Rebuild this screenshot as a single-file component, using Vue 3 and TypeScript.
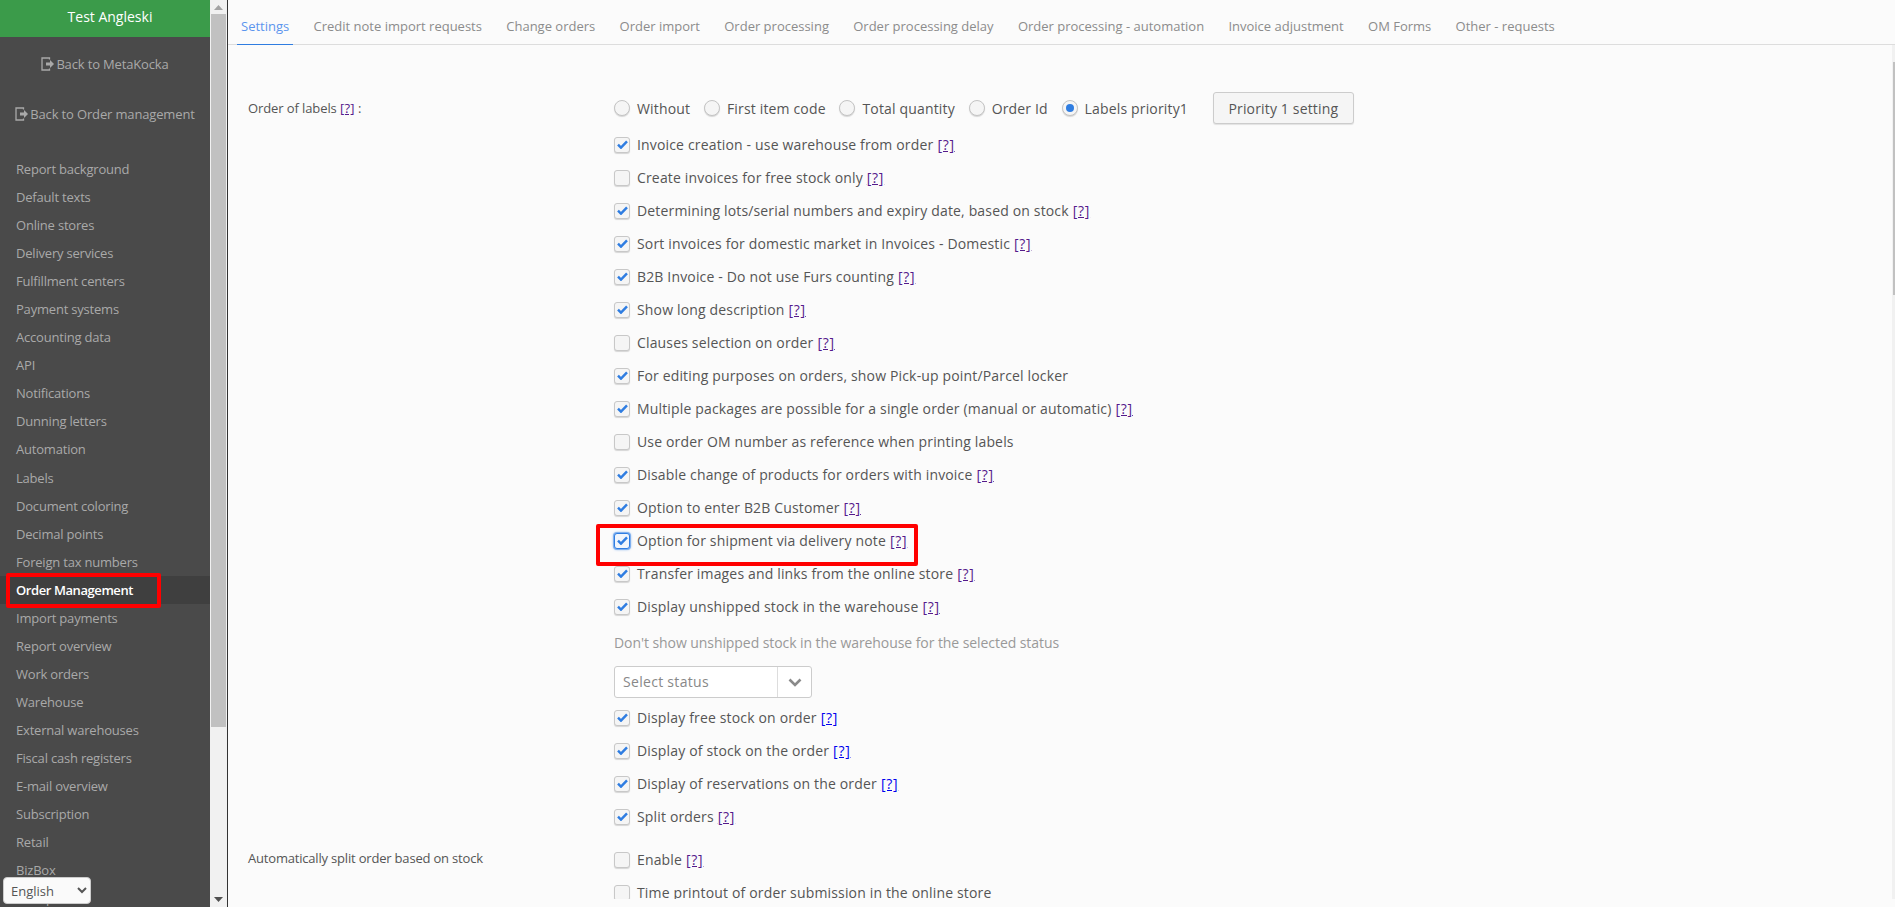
<script setup lang="ts">
const menu: string[] = ['Report background','Default texts','Online stores','Delivery services','Fulfillment centers','Payment systems','Accounting data','API','Notifications','Dunning letters','Automation','Labels','Document coloring','Decimal points','Foreign tax numbers','Order Management','Import payments','Report overview','Work orders','Warehouse','External warehouses','Fiscal cash registers','E-mail overview','Subscription','Retail','BizBox','Lock periods']
const tabs: string[] = ['Settings','Credit note import requests','Change orders','Order import','Order processing','Order processing delay','Order processing - automation','Invoice adjustment','OM Forms','Other - requests']
const radios = [{t:'Without',on:false},{t:'First item code',on:false},{t:'Total quantity',on:false},{t:'Order Id',on:false},{t:'Labels priority1',on:true}]
interface Row { t: string; on: boolean; q: boolean; focus?: boolean; fresh?: boolean }
const rows1: Row[] = [
 {t:'Invoice creation - use warehouse from order',on:true,q:true},
 {t:'Create invoices for free stock only',on:false,q:true},
 {t:'Determining lots/serial numbers and expiry date, based on stock',on:true,q:true},
 {t:'Sort invoices for domestic market in Invoices - Domestic',on:true,q:true},
 {t:'B2B Invoice - Do not use Furs counting',on:true,q:true},
 {t:'Show long description',on:true,q:true},
 {t:'Clauses selection on order',on:false,q:true},
 {t:'For editing purposes on orders, show Pick-up point/Parcel locker',on:true,q:false},
 {t:'Multiple packages are possible for a single order (manual or automatic)',on:true,q:true},
 {t:'Use order OM number as reference when printing labels',on:false,q:false},
 {t:'Disable change of products for orders with invoice',on:true,q:true},
 {t:'Option to enter B2B Customer',on:true,q:true},
 {t:'Option for shipment via delivery note',on:true,q:true,focus:true},
 {t:'Transfer images and links from the online store',on:true,q:true},
 {t:'Display unshipped stock in the warehouse',on:true,q:true},
]
const rows2: Row[] = [
 {t:'Display free stock on order',on:true,q:true,fresh:true},
 {t:'Display of stock on the order',on:true,q:true,fresh:true},
 {t:'Display of reservations on the order',on:true,q:true,fresh:true},
 {t:'Split orders',on:true,q:true},
]
const rows3: Row[] = [
 {t:'Enable',on:false,q:true},
 {t:'Time printout of order submission in the online store',on:false,q:false},
]
</script>

<template>
  <div class="page">
    <aside class="side">
      <div class="side-scroll">
        <div class="brand">Test Angleski</div>
        <a class="back back-a"><svg class="ic" viewBox="0 0 14 14"><path d="M8.500 2.500V1H1v12h7.500v-1.500" fill="none" stroke="currentColor" stroke-width="1.300"/><path d="M5 5.500h4V3l4 4-4 4V8.500H5z" fill="currentColor"/></svg>Back to MetaKocka</a>
        <a class="back back-b"><svg class="ic" viewBox="0 0 14 14"><path d="M8.500 2.500V1H1v12h7.500v-1.500" fill="none" stroke="currentColor" stroke-width="1.300"/><path d="M5 5.500h4V3l4 4-4 4V8.500H5z" fill="currentColor"/></svg>Back to Order management</a>
        <ul class="menu">
          <li v-for="m in menu" :key="m" :class="{ active: m === 'Order Management' }"><span>{{ m }}</span></li>
        </ul>
      </div>
      <div class="bar">
        <svg class="arrow" viewBox="0 0 9 5"><path d="M4.500 0 9 5H0z" fill="#a3a3a3"/></svg>
        <div class="thumb"></div>
        <svg class="arrow down" viewBox="0 0 9 5"><path d="M0 0h9L4.500 5z" fill="#505050"/></svg>
      </div>
      <select class="lang"><option>English</option></select>
    </aside>
    <main class="main">
      <nav class="tabs">
        <a v-for="(t, i) in tabs" :key="t" class="tab" :class="{ on: i === 0 }">{{ t }}</a>
      </nav>
      <div class="form">
        <div class="line first">
          <label class="lab">Order of labels <a class="q qlab">[?]</a> :</label>
          <div class="ctl">
            <div class="radios">
              <span v-for="r in radios" :key="r.t" class="radio-item"><i class="radio" :class="{ on: r.on }"></i>{{ r.t }}</span>
              <button class="btn">Priority 1 setting</button>
            </div>
            <div v-for="r in rows1" :key="r.t" class="row">
              <i class="cb" :class="{ focus: r.focus }"><svg v-if="r.on" viewBox="0 0 12 10"><path d="M1 5.200 4.300 8.500 11 1.500" fill="none" stroke="#2f7de1" stroke-width="2.700"/></svg></i>
              <span class="txt">{{ r.t }}<a v-if="r.q" class="q">[?]</a></span>
            </div>
            <div class="hint">Don't show unshipped stock in the warehouse for the selected status</div>
            <div class="sel"><span class="sel-t">Select status</span><span class="sel-a"><svg viewBox="0 0 14 9"><path d="M1.500 1.500 7 7l5.500-5.500" fill="none" stroke="#8a8a8a" stroke-width="2.600"/></svg></span></div>
            <div v-for="r in rows2" :key="r.t" class="row">
              <i class="cb"><svg v-if="r.on" viewBox="0 0 12 10"><path d="M1 5.200 4.300 8.500 11 1.500" fill="none" stroke="#2f7de1" stroke-width="2.700"/></svg></i>
              <span class="txt">{{ r.t }}<a v-if="r.q" class="q" :class="{ fresh: r.fresh }">[?]</a></span>
            </div>
          </div>
        </div>
        <div class="line second">
          <label class="lab small">Automatically split order based on stock</label>
          <div class="ctl">
            <div v-for="r in rows3" :key="r.t" class="row">
              <i class="cb"></i>
              <span class="txt">{{ r.t }}<a v-if="r.q" class="q">[?]</a></span>
            </div>
          </div>
        </div>
      </div>
      <div class="rscroll"><div class="rthumb"></div></div>
    </main>
    <div class="mark mark-a"></div>
    <div class="mark mark-b"></div>
  </div>
</template>

<style>
html, body { margin: 0; overflow: hidden; background: #fbfbfb; }
</style>

<style scoped>
.page { display: flex; width: 1895px; height: 907px; overflow: hidden; position: relative; font-family: "Open Sans", sans-serif; }
.side { width: 227px; flex: none; display: flex; position: relative; border-right: 1px solid #333; }
.side-scroll { width: 210px; height: 907px; overflow: hidden; background: #4a4a4a; flex: none; }
.brand { height: 37px; background: #3b9b4a; color: #fff; font-size: 14px; line-height: 34px; text-align: center; padding-left: 10px; }
.back { display: block; color: #a9a9a9; font-size: 13px; text-align: center; line-height: 18px; letter-spacing: -0.15px; }
.back-a { padding-top: 18px; height: 32px; }
.back-b { padding-top: 18px; height: 32px; }
.ic { width: 14px; height: 14px; margin-right: 1px; vertical-align: -2px; }
.menu { list-style: none; margin: 18px 0 0; padding: 0; }
.menu li { height: 28.05px; line-height: 28.05px; padding-left: 16px; font-size: 13px; color: #a9a9a9; letter-spacing: -0.2px; }
.menu li.active { background: #3f3f3f; color: #fff; font-weight: 600; letter-spacing: -0.42px; }
.bar { width: 17px; background: #f1f1f1; display: flex; flex-direction: column; align-items: center; }
.arrow { width: 9px; height: 5px; margin: 5px 0 4px; flex: none; }
.arrow.down { margin: 4px 0 5px; }
.thumb { width: 15px; height: 713px; background: #c1c1c1; margin-bottom: auto; }
.lang { position: absolute; left: 3px; top: 877px; width: 88px; height: 27px; font: 13px "Open Sans", sans-serif; color: #555; background: #fafafa; border: 1px solid #ccc; border-radius: 4px; padding-left: 3px; }
.main { flex: 1; min-width: 0; background: #fbfbfb; position: relative; height: 899px; overflow: hidden; }
.tabs { display: flex; height: 44px; border-bottom: 1px solid #ddd; padding-left: 9px; }
.tab { padding: 0 4px; margin-right: 16.300px; font-size: 13px; line-height: 52px; height: 44px; color: #8c8c8c; white-space: nowrap; box-sizing: content-box; }
.tab.on { color: #5b95ee; border-bottom: 1px solid #2f7de1; }
.form { padding-top: 46px; }
.line { display: flex; }
.lab { width: 386px; padding-left: 20px; box-sizing: border-box; font-size: 13px; color: #555; flex: none; line-height: 20px; letter-spacing: -0.1px; }
.lab.small { padding-top: 5px; letter-spacing: -0.19px; }
.first .lab { padding-top: 7px; }
.second { margin-top: 10px; }
.ctl { flex: 1; }
.q { color: #551a8b; font-size: 14px; margin-left: 4px; letter-spacing: 0.7px; text-decoration: underline; }
.q.fresh { color: #0000ee; }
.q.qlab { font-size: 13px; margin-left: 0; letter-spacing: 0.2px; }
.radios { display: flex; align-items: center; height: 34px; margin-bottom: 3px; }
.radio-item { display: flex; align-items: center; font-size: 14px; color: #555; margin-right: 13.8px; letter-spacing: 0.16px; }
.radio { width: 16px; height: 16px; border: 1px solid #c4c4c4; border-radius: 50%; background: #f5f5f5; margin-right: 7px; box-shadow: 0 1px 1px rgba(0,0,0,.15); box-sizing: border-box; position: relative; }
.radio.on::after { content: ""; position: absolute; left: 3px; top: 3px; width: 8px; height: 8px; border-radius: 50%; background: #2f7de1; }
.btn { margin-left: 11px; width: 141px; height: 32px; font: 14px "Open Sans", sans-serif; letter-spacing: 0.16px; color: #555; background: #f5f5f5; border: 1px solid #ccc; border-radius: 3px; box-shadow: 0 1px 1px rgba(0,0,0,.1); padding: 0; }
.row { display: flex; align-items: center; height: 33px; }
.cb { width: 16px; height: 16px; border: 1px solid #c8c8c8; border-radius: 3px; background: #f5f5f5; box-shadow: 0 1px 1px rgba(0,0,0,.15); margin-right: 7px; box-sizing: border-box; display: flex; align-items: center; justify-content: center; flex: none; }
.cb svg { width: 11px; height: 9px; }
.cb.focus { border-color: #2f7de1; box-shadow: 0 0 0 1px #7fb0ef, 0 0 3px #2f7de1; background: #f0f5fc; }
.txt { font-size: 14px; color: #555; white-space: nowrap; letter-spacing: 0.16px; }
.hint { font-size: 14px; color: #999; height: 25px; line-height: 25px; margin-top: 7px; letter-spacing: -0.07px; }
.sel { margin-top: 11px; width: 198px; height: 32px; border: 1px solid #ccc; border-radius: 3px; display: flex; box-sizing: border-box; background: #fff; margin-bottom: 3px; }
.sel-t { flex: 1; padding-left: 8px; font-size: 14px; color: #888; line-height: 30px; letter-spacing: 0.3px; }
.sel-a { width: 33px; border-left: 1px solid #ddd; display: flex; align-items: center; justify-content: center; }
.sel-a svg { width: 14px; height: 9px; }
.rscroll { position: absolute; right: 0; top: 45px; bottom: 0; width: 3px; background: #f1f1f1; }
.rthumb { position: absolute; left: 1px; right: 0; top: 17px; height: 233px; background: #c1c1c1; }
.mark { position: absolute; border: 4px solid #f00; border-radius: 2px; box-sizing: border-box; }
.mark-a { left: 6px; top: 573px; width: 155px; height: 35px; }
.mark-b { left: 596px; top: 524px; width: 322px; height: 42px; }
</style>
